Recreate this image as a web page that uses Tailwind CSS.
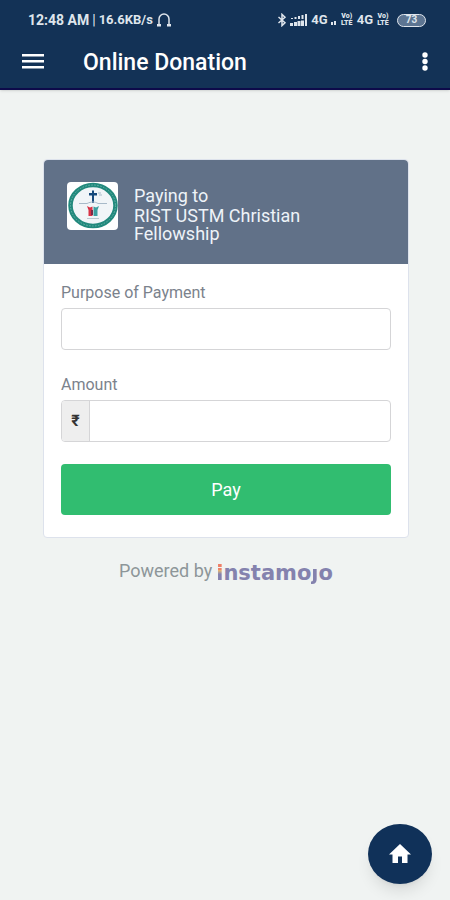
<!DOCTYPE html>
<html lang="en">
<head>
    <meta charset="UTF-8">
    <meta name="viewport" content="width=device-width, initial-scale=1.0">
    <title>Online Donation</title>
    <script src="https://cdn.jsdelivr.net/npm/@tailwindcss/browser@4"></script>
</head>
<body class="min-h-screen bg-[#f0f3f2] font-['Roboto',sans-serif]">
    <!-- Header -->
    <header class="border-b-2 border-[#0d0a4a] bg-[#133256] text-white shadow-sm">
        <!-- Status bar -->
        <div class="flex h-10 items-center justify-between pr-6 pl-7 text-sm font-bold text-[#dfe5ec]">
            <div class="flex items-center gap-[3px]">
                <span>12:48 AM</span>
                <span class="font-normal">|</span>
                <span class="text-[13px]">16.6KB/s</span>
                <svg class="h-[14px] w-4" viewBox="0 0 16 14" fill="none" stroke="currentColor" stroke-width="1.5">
                    <path d="M3 12V6a5 5 0 0 1 10 0v6" />
                    <path d="M1 12.2h4M11 12.2h4" stroke-width="2.4" />
                </svg>
            </div>
            <div class="flex items-center gap-[3px] text-[13px]">
                <svg class="h-[14px] w-[10px]" viewBox="0 0 10 14" fill="none" stroke="currentColor" stroke-width="1.5">
                    <path d="M1.5 4 8 9.8 5 12.6V1.4L8 4.2 1.5 10" />
                </svg>
                <svg class="h-3 w-[18px]" viewBox="0 0 18 12" fill="currentColor">
                    <path d="M1 4h2v1H1zM4.500 3h2v2h-2zM8 2h2v3H8zM11.500 1h2v4h-2zM15 0h2v5h-2z" />
                    <path d="M0 9h3v3H0zM4 8h3v4H4zM7.500 7h3v5h-3zM11 6.500h3V12h-3zM15 5h2v7h-2z" />
                </svg>
                <span>4G</span>
                <svg class="h-3 w-[6px]" viewBox="0 0 6 12" fill="currentColor">
                    <path d="M0 8h2v3H0zM3 7h2v4H3z" />
                </svg>
                <span class="flex w-[14px] flex-col text-center text-[7px] leading-[7px] font-black"><span>Vo)</span><span>LTE</span></span>
                <span>4G</span>
                <span class="flex w-[14px] flex-col text-center text-[7px] leading-[7px] font-black"><span>Vo)</span><span>LTE</span></span>
                <span class="ml-1 flex h-[13px] w-[29px] items-center justify-center rounded-full border border-[#dfe5ec] bg-[#5d7592] text-[10px]">73</span>
            </div>
        </div>

        <!-- App bar -->
        <div class="flex h-12 items-center pr-[18px] pb-[3px] pl-[21px]">
            <button type="button" aria-label="Menu" class="mr-[38px]">
                <svg class="h-6 w-6" viewBox="0 0 24 24" fill="currentColor">
                    <path d="M1 3h22v2.500H1zM1 9h22v2.500H1zM1 15h22v2.500H1z" />
                </svg>
            </button>
            <h1 class="flex-1 text-[23px] leading-8 font-medium">Online Donation</h1>
            <button type="button" aria-label="More options">
                <svg class="h-6 w-[14px]" viewBox="0 0 14 24" fill="currentColor">
                    <circle cx="7" cy="4" r="2.700" />
                    <circle cx="7" cy="10.500" r="2.700" />
                    <circle cx="7" cy="17" r="2.700" />
                </svg>
            </button>
        </div>
    </header>

    <!-- Payment form -->
    <main class="pt-[69px] pr-[41px] pl-[43px]">
        <form class="rounded border border-[#dde2ec] bg-white">
            <div class="flex h-[104px] items-start gap-4 rounded-t bg-[#617188] px-[23px] pt-[22px] text-lg text-[#eef3f8]">
                <svg class="h-12 w-[51px] shrink-0 rounded bg-white" viewBox="0 0 51 48" role="img" aria-label="Fellowship logo">
                    <ellipse cx="26" cy="23.500" rx="22.500" ry="20.500" fill="#f1f5f8" stroke="#22897d" stroke-width="4.500" />
                    <ellipse cx="26" cy="23.500" rx="22.500" ry="20.500" fill="none" stroke="#69b3a9" stroke-width="1" stroke-dasharray="1.500 1.500" />
                    <path d="M25 8.500h2V11h3v2.500h-3V21h-2v-7.500h-3V11h3z" fill="#174a7c" />
                    <path d="M31 11h3M32 13h3" stroke="#a9bccb" stroke-width="1" />
                    <path d="M12 21.500h8c4-2 8-2 11 0h9" fill="none" stroke="#a8bac9" stroke-width="1" />
                    <path d="M20 24l3 1.500 2.500-1V34H21.500v-6z" fill="#d83246" />
                    <path d="M32 24l-3 1.500-2.500-1V34h4v-6z" fill="#3c9fa0" />
                    <path d="M24 28h2v5h-2z" fill="#7c2c48" />
                    <path d="M20 36.500h12" stroke="#b9c8d0" stroke-width="1" />
                </svg>
                <div class="pt-[3px]">
                    <p class="leading-[22px]">Paying to</p>
                    <p class="leading-[18px]">RIST USTM Christian Fellowship</p>
                </div>
            </div>

            <div class="px-[17px] pt-[19px] pb-[22px]">
                <label for="purpose" class="block text-base leading-5 text-[#7b828c]">Purpose of Payment</label>
                <input id="purpose" type="text" class="mt-[5px] block h-[42px] w-full rounded border border-[#d5d5d7] px-3">

                <label for="amount" class="mt-[25px] block text-base leading-5 text-[#7b828c]">Amount</label>
                <div class="mt-[5px] flex h-[42px] overflow-hidden rounded border border-[#d5d5d7]">
                    <span class="flex w-7 items-center justify-center border-r border-[#d5d5d7] bg-[#eeeeee] text-base font-bold text-[#333333]">₹</span>
                    <input id="amount" type="text" inputmode="decimal" class="min-w-0 flex-1 px-3">
                </div>

                <button type="submit" class="mt-[22px] h-[51px] w-full rounded bg-[#31bd70] text-lg text-white">Pay</button>
            </div>
        </form>

        <!-- Provider -->
        <p class="mt-[17px] flex items-center justify-center gap-1 text-lg text-[#8d9699]">
            Powered by
            <a href="#" class="pt-1 font-['DejaVu_Sans',sans-serif] text-[21px] leading-7 font-bold text-[#8482ae]"><span class="bg-linear-to-b from-[#ee8068] from-35% via-[#e3b56f] via-40% to-[#8482ae] to-55% bg-clip-text text-transparent">i</span>nstamo<span class="bg-linear-to-b from-transparent from-35% to-[#8482ae] to-35% bg-clip-text text-transparent">j</span>o</a>
        </p>
    </main>

    <!-- Floating home button -->
    <a href="#" aria-label="Home" class="fixed right-[18px] bottom-4 flex h-[60px] w-16 items-center justify-center rounded-[50%] bg-[#103159] text-white shadow-lg">
        <svg class="h-6 w-6" viewBox="0 0 24 24" fill="currentColor">
            <path d="M10 21v-6.500h4V21h5.500v-8.500H23L12 2 1 12.500h3.500V21z" />
        </svg>
    </a>
</body>
</html>
